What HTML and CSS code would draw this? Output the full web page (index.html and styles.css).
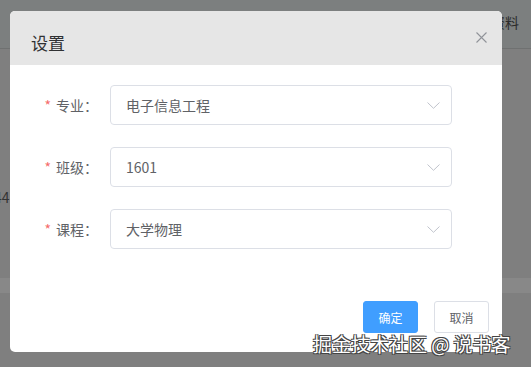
FILE: index.html
```html
<!DOCTYPE html>
<html lang="zh-CN">
  <head>
    <meta charset="UTF-8" />
    <meta name="viewport" content="width=device-width, initial-scale=1.0" />
    <title>设置</title>
    <link rel="stylesheet" href="styles.css">
  </head>
  <body>
    <!-- page behind the mask -->
    <div class="pg-Page">
      <header class="pg-Top">
        <span class="pg-Top_Link">资料</span>
      </header>
      <div class="pg-Row">44</div>
      <div class="pg-Band"></div>
    </div>

    <div class="dlg-Mask">
      <section class="dlg-Dialog">
        <header class="dlg-Header">
          <h1 class="dlg-Title">设置</h1>
          <button class="dlg-Close" aria-label="关闭">
            <svg width="11" height="11" viewBox="0 0 11 11">
              <path d="M0.5 0.5 L10.5 10.5 M10.5 0.5 L0.5 10.5" stroke="#909399" stroke-width="1.1" fill="none" />
            </svg>
          </button>
        </header>

        <form class="dlg-Body">
          <div class="frm-Item">
            <label class="frm-Label"><span class="frm-Star">*</span>专业：</label>
            <div class="frm-Select">
              <span class="frm-Value">电子信息工程</span>
              <svg class="frm-Arrow" width="13" height="7" viewBox="0 0 13 7">
                <path d="M0.5 0.5 L6.5 6.3 L12.5 0.5" stroke="#c0c4cc" stroke-width="1" fill="none" />
              </svg>
            </div>
          </div>
          <div class="frm-Item">
            <label class="frm-Label"><span class="frm-Star">*</span>班级：</label>
            <div class="frm-Select">
              <span class="frm-Value">1601</span>
              <svg class="frm-Arrow" width="13" height="7" viewBox="0 0 13 7">
                <path d="M0.5 0.5 L6.5 6.3 L12.5 0.5" stroke="#c0c4cc" stroke-width="1" fill="none" />
              </svg>
            </div>
          </div>
          <div class="frm-Item">
            <label class="frm-Label"><span class="frm-Star">*</span>课程：</label>
            <div class="frm-Select">
              <span class="frm-Value">大学物理</span>
              <svg class="frm-Arrow" width="13" height="7" viewBox="0 0 13 7">
                <path d="M0.5 0.5 L6.5 6.3 L12.5 0.5" stroke="#c0c4cc" stroke-width="1" fill="none" />
              </svg>
            </div>
          </div>
        </form>

        <footer class="dlg-Footer">
          <button class="dlg-Btn dlg-Btn_Primary">确定</button>
          <button class="dlg-Btn">取消</button>
        </footer>
      </section>
    </div>

    <div class="wm-Mark">掘金技术社区 @ 说书客</div>
  </body>
</html>
```

FILE: styles.css
```css
html {
  box-sizing: border-box;
  -webkit-font-smoothing: antialiased;
}

* {
  box-sizing: inherit;
}

body,
h1 {
  margin: 0;
  font-weight: 400;
}

button {
  appearance: none;
  background-color: transparent;
  border: 0;
  padding: 0;
  font-family: inherit;
}

body {
  width: 531px;
  height: 367px;
  overflow: hidden;
  position: relative;
  background-color: #7f7f7f;
  font-family: 'Noto Sans CJK SC', 'Liberation Sans', sans-serif;
}

/* Page behind the mask */

.pg-Page {
  display: flex;
  flex-direction: column;
  height: 100%;
}

.pg-Top {
  height: 49px;
  display: flex;
  justify-content: flex-end;
  align-items: center;
  background-color: #7c7f7f;
  border-bottom: 1px solid #6f7171;
  padding-bottom: 4px;
}

.pg-Top_Link {
  font-size: 14px;
  color: #2b2b2b;
  margin-right: 12px;
}

.pg-Row {
  margin-top: 138px;
  font-size: 14px;
  color: #333;
  margin-left: -6px;
}

.pg-Band {
  margin-top: 71px;
  height: 15px;
  background-color: #888;
}

/* Dialog */

.dlg-Mask {
  position: absolute;
  inset: 0;
  padding: 11px 29px 0 10px;
}

.dlg-Dialog {
  background-color: #fff;
  border-radius: 5px;
  overflow: hidden;
  height: 341px;
  display: flex;
  flex-direction: column;
}

.dlg-Header {
  height: 54px;
  background-color: #e6e6e6;
  display: flex;
  align-items: center;
  justify-content: space-between;
  padding: 10px 15px 0 21px;
}

.dlg-Title {
  font-size: 17px;
  line-height: 24px;
  color: #303133;
}

.dlg-Close {
  display: flex;
  margin-top: -11px;
}

.dlg-Body {
  padding: 20px 50px 0 0;
  display: flex;
  flex-direction: column;
  gap: 22px;
}

.frm-Item {
  display: flex;
  align-items: center;
}

.frm-Label {
  width: 100px;
  padding-right: 12px;
  text-align: right;
  font-size: 14px;
  color: #606266;
}

.frm-Star {
  color: #f56c6c;
  margin-right: 5px;
}

.frm-Select {
  flex: 1;
  height: 40px;
  border: 1px solid #dcdfe6;
  border-radius: 4px;
  display: flex;
  align-items: center;
  justify-content: space-between;
  padding: 0 11px 0 15px;
}

.frm-Value {
  font-size: 14px;
  color: #606266;
}

.frm-Arrow {
  display: block;
  margin-top: 1px;
}

.dlg-Footer {
  margin-top: auto;
  display: flex;
  justify-content: flex-end;
  gap: 16px;
  padding: 0 13px 19px 0;
}

.dlg-Btn {
  width: 55px;
  height: 32px;
  border: 1px solid #dcdfe6;
  border-radius: 3px;
  font-size: 12px;
  color: #606266;
  text-align: center;
  background-color: #fff;
}

.dlg-Btn_Primary {
  background-color: #409eff;
  border-color: #409eff;
  color: #fff;
}

/* Watermark */

.wm-Mark {
  position: absolute;
  left: 313px;
  top: 331px;
  font-size: 19px;
  line-height: 26px;
  color: #fff;
  white-space: nowrap;
  text-shadow: 1px 1px 0 #444, -1px -1px 0 #444, 1px -1px 0 #444, -1px 1px 0 #444;
}
```
